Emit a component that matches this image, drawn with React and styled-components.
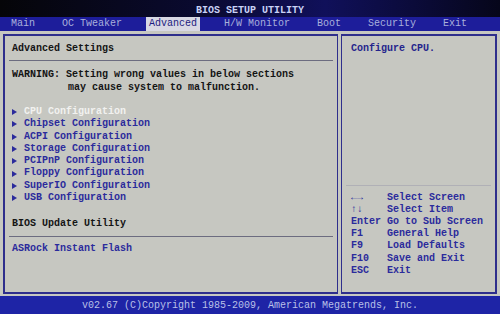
import React from 'react'
import styled, { createGlobalStyle } from 'styled-components';

const tabs = ['Main', 'OC Tweaker', 'Advanced', 'H/W Monitor', 'Boot', 'Security', 'Exit'];

const items = [
    'CPU Configuration',
    'Chipset Configuration',
    'ACPI Configuration',
    'Storage Configuration',
    'PCIPnP Configuration',
    'Floppy Configuration',
    'SuperIO Configuration',
    'USB Configuration',
];

const keys = [
    ['\u2190\u2192', 'Select Screen'],
    ['\u2191\u2193', 'Select Item'],
    ['Enter', 'Go to Sub Screen'],
    ['F1', 'General Help'],
    ['F9', 'Load Defaults'],
    ['F10', 'Save and Exit'],
    ['ESC', 'Exit'],
];

const App = () => {
    return (
        <Screen>
            <GlobalStyle />
            <TitleBar>BIOS SETUP UTILITY</TitleBar>
            <MenuBar>
                {tabs.map(t => (
                    <Tab key={t} active={t === 'Advanced'}>{t}</Tab>
                ))}
            </MenuBar>
            <Panel>
                <LeftBox>
                    <Heading>Advanced Settings</Heading>
                    <Warning>
                        <div>WARNING: Setting wrong values in below sections</div>
                        <Indent>may cause system to malfunction.</Indent>
                    </Warning>
                    <ItemList>
                        {items.map((it, i) => (
                            <Item key={it} active={i === 0}>
                                <Arrow />
                                {it}
                            </Item>
                        ))}
                    </ItemList>
                    <Heading className='update'>BIOS Update Utility</Heading>
                    <Item className='flash'>ASRock Instant Flash</Item>
                </LeftBox>
                <RightBox>
                    <Help>Configure CPU.</Help>
                    <Legend>
                        {keys.map(([k, d]) => (
                            <KeyRow key={k}>
                                <KeyName>{k}</KeyName>
                                <span>{d}</span>
                            </KeyRow>
                        ))}
                    </Legend>
                </RightBox>
            </Panel>
            <Footer>v02.67 (C)Copyright 1985-2009, American Megatrends, Inc.</Footer>
        </Screen>
    )
}

export default App;

const GlobalStyle = createGlobalStyle`
    html, body {
        margin: 0;
        padding: 0;
        background: #08081a;
    }
    body {
        font-family: "Liberation Mono", "DejaVu Sans Mono", monospace;
        font-size: 10px;
        font-weight: bold;
    }
`;

const Screen = styled.div`
    width: 500px;
    height: 314px;
    overflow: hidden;
    display: flex;
    flex-direction: column;
    background: #08081a;
`;

const TitleBar = styled.div`
    height: 17px;
    flex-shrink: 0;
    line-height: 22px;
    text-align: center;
    color: #c9d2f6;
    background: linear-gradient(90deg, #050508 0%, #0a0a30 40%, #10105a 65%, #06061a 100%);
`;

const MenuBar = styled.div`
    height: 14px;
    flex-shrink: 0;
    display: flex;
    align-items: center;
    gap: 21px;
    padding-left: 8px;
    background: #1d1d9a;
`;

const Tab = styled.span`
    padding: 0 3px;
    line-height: 14px;
    font-weight: normal;
    color: ${p => p.active ? '#1c1c80' : '#a9b0dc'};
    background: ${p => p.active ? '#d8d8e4' : 'transparent'};
`;

const Panel = styled.div`
    height: 265px;
    flex-shrink: 0;
    box-sizing: border-box;
    padding: 3px 3px 2px 3px;
    display: grid;
    grid-template-columns: 335px 1fr;
    gap: 3px;
    background: #c6c7c1;
`;

const LeftBox = styled.div`
    border: 2px solid #2e2e8c;
    border-right-width: 1px;
    display: flex;
    flex-direction: column;
    padding: 0 4px;

    .update {
        margin-top: 14px;
        padding-top: 0;
        height: 18px;
    }
    .flash {
        margin-top: 6px;
        padding-left: 3px;
    }
`;

const RightBox = styled.div`
    border: 2px solid #2e2e8c;
    border-left-width: 1px;
    display: flex;
    flex-direction: column;
    padding: 0 4px;
`;

const Heading = styled.div`
    color: #141414;
    line-height: 12px;
    padding: 7px 0 0 3px;
    height: 17px;
    border-bottom: 1px solid #6c6c80;
`;

const Warning = styled.div`
    margin-top: 8px;
    padding-left: 3px;
    line-height: 12.5px;
    color: #141414;
`;

const Indent = styled.div`
    padding-left: 56px;
`;

const ItemList = styled.div`
    margin-top: 12px;
    display: flex;
    flex-direction: column;
`;

const Item = styled.div`
    line-height: 12.3px;
    color: ${p => p.active ? '#f2f2f0' : '#2b2b9c'};
    display: flex;
    align-items: center;
`;

const Arrow = styled.span`
    width: 0;
    height: 0;
    margin: 0 7px 0 3px;
    border-top: 3px solid transparent;
    border-bottom: 3px solid transparent;
    border-left: 5px solid #2b2b9c;
`;

const Help = styled.div`
    padding: 7px 0 0 5px;
    line-height: 12px;
    color: #24248c;
`;

const Legend = styled.div`
    margin-top: auto;
    padding: 6px 0 15px 5px;
    border-top: 1px solid #b0b0b6;
    color: #2b2b9c;
    line-height: 12.2px;
`;

const KeyRow = styled.div`
    display: flex;
`;

const KeyName = styled.span`
    width: 36px;
    flex-shrink: 0;
`;

const Footer = styled.div`
    height: 18px;
    flex-shrink: 0;
    text-align: center;
    line-height: 19px;
    font-weight: normal;
    color: #b9c0e6;
    background: #1e24a6;
`;
